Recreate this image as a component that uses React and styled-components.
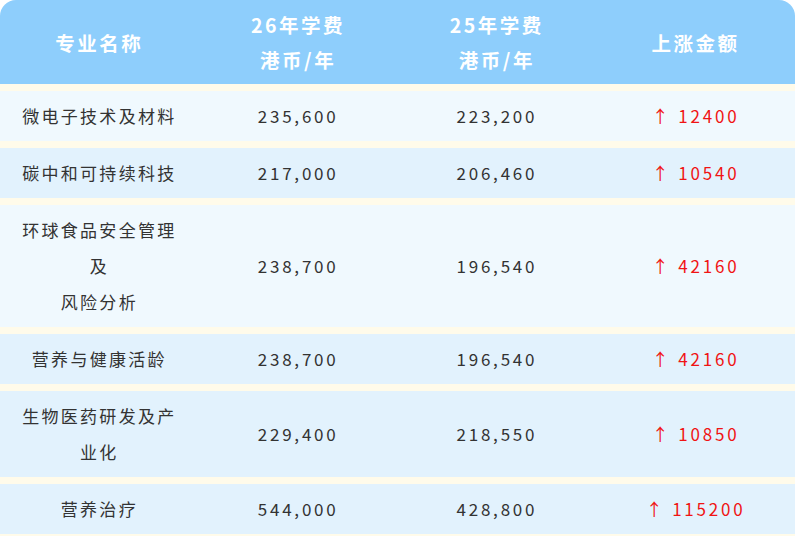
import React from "react";
import styled, { createGlobalStyle } from "styled-components";

const GlobalStyle = createGlobalStyle`
  html, body { margin: 0; padding: 0; background: #ffffff; }
  body { font-family: "Noto Sans CJK SC", "Noto Sans", sans-serif; }
`;

const Table = styled.div`
  width: 795px;
  display: flex;
  flex-direction: column;
`;

const HeaderRow = styled.div`
  display: grid;
  grid-template-columns: repeat(4, 1fr);
  background: #8ecefc;
  border-radius: 16px 16px 0 0;
  height: 84px;
`;

const HeadCell = styled.div`
  display: flex;
  align-items: center;
  justify-content: center;
  text-align: center;
  color: #ffffff;
  font-weight: 700;
  font-size: 19.5px;
  line-height: 35px;
  letter-spacing: 2.5px;
  padding: 7px 10px;
`;

const Body = styled.div`
  display: flex;
  flex-direction: column;
  gap: 7px;
  padding: 7px 0 3px;
  background: #fffbea;
`;

const Row = styled.div`
  display: grid;
  grid-template-columns: repeat(4, 1fr);
  background: ${(p) => (p.$light ? "#f0f9fe" : "#e2f2fd")};
`;

const Cell = styled.div`
  display: flex;
  align-items: center;
  justify-content: center;
  text-align: center;
  padding: 7px 20px;
  font-size: 17px;
  line-height: 36px;
  letter-spacing: ${(p) => (p.$num ? "2.8px" : "2.3px")};
  color: ${(p) => (p.$up ? "#f01414" : "#333333")};
`;

const rows = [
  { name: ["微电子技术及材料"], a: "235,600", b: "223,200", up: "12400", light: true },
  { name: ["碳中和可持续科技"], a: "217,000", b: "206,460", up: "10540" },
  { name: ["环球食品安全管理", "及", "风险分析"], a: "238,700", b: "196,540", up: "42160", light: true },
  { name: ["营养与健康活龄"], a: "238,700", b: "196,540", up: "42160" },
  { name: ["生物医药研发及产", "业化"], a: "229,400", b: "218,550", up: "10850" },
  { name: ["营养治疗"], a: "544,000", b: "428,800", up: "115200" },
];

export default function App() {
  return (
    <>
      <GlobalStyle />
      <Table>
        <HeaderRow>
          <HeadCell>专业名称</HeadCell>
          <HeadCell>26年学费<br />港币/年</HeadCell>
          <HeadCell>25年学费<br />港币/年</HeadCell>
          <HeadCell>上涨金额</HeadCell>
        </HeaderRow>
        <Body>
          {rows.map((r, i) => (
            <Row key={i} $light={r.light}>
              <Cell>
                <span>
                  {r.name.map((line, j) => (
                    <React.Fragment key={j}>
                      {j > 0 && <br />}
                      {line}
                    </React.Fragment>
                  ))}
                </span>
              </Cell>
              <Cell $num>{r.a}</Cell>
              <Cell $num>{r.b}</Cell>
              <Cell $num $up>↑ {r.up}</Cell>
            </Row>
          ))}
        </Body>
      </Table>
    </>
  );
}
